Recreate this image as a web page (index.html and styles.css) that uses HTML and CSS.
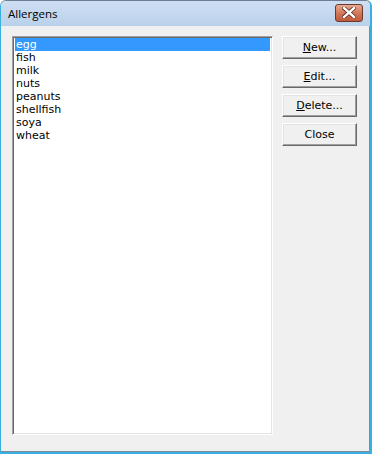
FILE: index.html
```html
<!DOCTYPE html>
<html>
  <head>
    <title>Allergens</title>
    <link rel="stylesheet" href="styles.css">
  </head>
  <body>
    <div class="window">
      <div class="titlebar">
        <span class="title">Allergens</span>
        <span class="close-box">
          <svg width="14" height="11" viewBox="0 0 14 11">
            <path d="M2 1 L12 10 M12 1 L2 10" stroke="#5a2a1e" stroke-width="4" stroke-linecap="square"/>
            <path d="M2 1 L12 10 M12 1 L2 10" stroke="#ffffff" stroke-width="2.4" stroke-linecap="square"/>
          </svg>
        </span>
      </div>
      <div class="client">
        <ul class="listbox">
          <li class="selected">egg</li>
          <li>fish</li>
          <li>milk</li>
          <li>nuts</li>
          <li>peanuts</li>
          <li>shellfish</li>
          <li>soya</li>
          <li>wheat</li>
        </ul>
        <div class="buttons">
          <button><u>N</u>ew...</button>
          <button><u>E</u>dit...</button>
          <button><u>D</u>elete...</button>
          <button>Close</button>
        </div>
      </div>
    </div>
  </body>
</html>
```

FILE: styles.css
```css
* {
  margin: 0;
  padding: 0;
  box-sizing: border-box;
}
body {
  background-color: #ffffff;
  font-family: "DejaVu Sans", sans-serif;
  font-size: 11px;
}
.window {
  width: 372px;
  height: 454px;
  background-color: #f0f0f0;
  border-top: 1px solid #6d7f96;
  border-left: 1px solid #3bb0e0;
  border-right: 2px solid #3bb0e0;
  border-bottom: 2px solid #3bb0e0;
  border-radius: 6px 6px 0 0;
  display: flex;
  flex-direction: column;
}
.titlebar {
  height: 25px;
  background: linear-gradient(#cfdff2, #b9d1ea);
  border-radius: 5px 5px 0 0;
  display: flex;
  align-items: center;
  justify-content: space-between;
  padding: 0 7px 0 7px;
}
.title {
  font-family: "Open Sans", sans-serif;
  font-size: 11.5px;
  color: #000000;
  margin-top: -1px;
}
.close-box {
  width: 28px;
  height: 18px;
  margin-top: -2px;
  border: 1px solid #6b3a2e;
  border-radius: 3px;
  background: linear-gradient(#e9a890, #d27a5c 50%, #c0583a);
  display: flex;
  align-items: center;
  justify-content: center;
}
.client {
  flex: 1;
  display: flex;
  gap: 9px;
  padding: 10px 12px 16px 11px;
  border-right: 1px solid #7f8b99;
  border-bottom: 1px solid #7f8b99;
}
.listbox {
  list-style: none;
  width: 261px;
  background-color: #ffffff;
  border-top: 1px solid #a0a0a0;
  border-left: 1px solid #a0a0a0;
  border-right: 1px solid #ffffff;
  border-bottom: 1px solid #ffffff;
  box-shadow: inset 1px 1px 0 #696969, inset -1px -1px 0 #e3e3e3;
  padding: 1px 2px;
}
.listbox li {
  height: 13px;
  line-height: 13px;
  padding-left: 1px;
  color: #000000;
}
.listbox .selected {
  background-color: #3399ff;
  color: #ffffff;
}
.buttons {
  display: flex;
  flex-direction: column;
  gap: 6px;
  padding-top: -1px;
}
button {
  width: 75px;
  height: 23px;
  font-family: "DejaVu Sans", sans-serif;
  font-size: 11px;
  color: #000000;
  background-color: #f0f0f0;
  border-top: 1px solid #ffffff;
  border-left: 1px solid #ffffff;
  border-right: 1px solid #696969;
  border-bottom: 1px solid #696969;
  box-shadow: inset -1px -1px 0 #a0a0a0, inset 1px 1px 0 #e3e3e3;
}
button u {
  text-decoration: underline;
}
```
